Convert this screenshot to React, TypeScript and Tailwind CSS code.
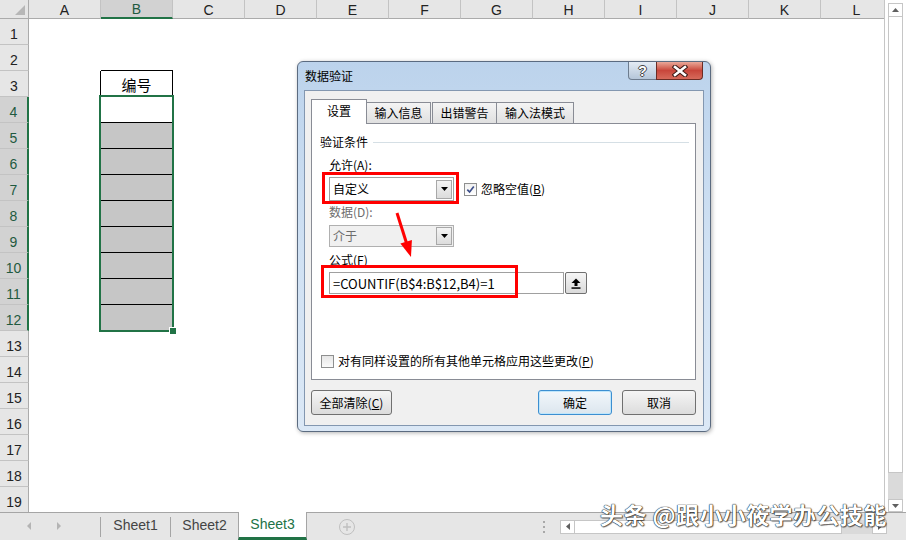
import React from 'react';

const COLS = ['A', 'B', 'C', 'D', 'E', 'F', 'G', 'H', 'I', 'J', 'K', 'L'];
const ROWS = Array.from({ length: 19 }, (_, i) => i + 1);

function cellClass(r: number, c: number): string {
  const base = 'w-[72px] h-[26px] shrink-0';
  if (c === 0 && r === 3) return base + ' border-r border-black';
  if (c === 1) {
    if (r === 2) return base + ' border-b border-black';
    if (r === 3) return base + ' border-r border-b border-black flex items-center justify-center';
    if (r === 4) return base + ' border-b border-black bg-white';
    if (r >= 5 && r <= 11) return base + ' border-b border-black bg-[#c6c6c6]';
    if (r === 12) return base + ' bg-[#c6c6c6]';
  }
  return base;
}

function rowHeaderClass(r: number): string {
  if (r >= 4 && r <= 12)
    return 'w-[29px] h-[26px] shrink-0 bg-[#d2d2d2] border-b border-[#c3c3c3] border-r-2 border-r-[#217346] text-[#1f5a40] flex items-end justify-center pb-[3px] text-[14px] leading-none';
  return 'w-[29px] h-[26px] shrink-0 bg-[#e6e6e6] border-b border-[#c3c3c3] border-r border-r-[#ababab] text-[#222] flex items-end justify-center pb-[3px] text-[14px] leading-none';
}

function Grid() {
  return (
    <div className="relative w-[885px] h-[512px] overflow-hidden border-r border-[#c6c6c6] flex flex-col">
      <div className="flex h-[19px] shrink-0">
        <div className="relative w-[29px] h-[19px] shrink-0 bg-[#e6e6e6] border-r border-b border-[#ababab]">
          <svg className="absolute left-0 top-0" width="29" height="19">
            <path d="M25 5 L25 15 L15 15 Z" fill="#b7b7b7" />
          </svg>
        </div>
        {COLS.map((c, i) =>
          i === 1 ? (
            <div
              key={c}
              className="w-[72px] h-[19px] shrink-0 bg-[#d2d2d2] border-r border-[#c3c3c3] border-b-2 border-b-[#217346] flex items-center justify-center text-[14px] leading-none text-[#1f5a40] pt-[1px]"
            >
              {c}
            </div>
          ) : (
            <div
              key={c}
              className="w-[72px] h-[19px] shrink-0 bg-[#e6e6e6] border-r border-[#c3c3c3] border-b border-b-[#ababab] flex items-center justify-center text-[14px] leading-none text-[#222] pt-[1px]"
            >
              {c}
            </div>
          )
        )}
      </div>
      {ROWS.map((r) => (
        <div key={r} className="flex h-[26px] shrink-0">
          <div className={rowHeaderClass(r)}>{r}</div>
          {COLS.map((c, i) => (
            <div key={c} className={cellClass(r, i)}>
              {r === 3 && i === 1 ? (
                <span className="font-['Noto_Sans_CJK_SC',sans-serif] text-[15px] leading-none pt-[2px] text-black">编号</span>
              ) : null}
            </div>
          ))}
        </div>
      ))}
      <div className="absolute left-[99px] top-[95px] w-[75px] h-[237px] border-2 border-[#217346]" />
      <div className="absolute left-[169px] top-[327px] w-[8px] h-[8px] bg-[#217346] border border-white" />
    </div>
  );
}

function VScroll() {
  return (
    <div className="w-[21px] h-[512px] bg-white flex flex-col pl-[3px] pr-[3px] pt-[3px]">
      <div className="w-[15px] h-[14px] border border-[#c6c6c6] bg-white flex items-center justify-center">
        <svg width="7" height="4"><path d="M0 4 L3.5 0 L7 4 Z" fill="#606060" /></svg>
      </div>
      <div className="w-[15px] h-[456px] border border-[#c6c6c6] border-t-0 bg-white" />
      <div className="w-[15px] h-[26px] bg-[#dadada]" />
      <div className="w-[15px] h-[13px] border border-[#c6c6c6] bg-white flex items-center justify-center">
        <svg width="7" height="4"><path d="M0 0 L7 0 L3.5 4 Z" fill="#606060" /></svg>
      </div>
    </div>
  );
}

function TabBar() {
  return (
    <div className="flex h-[28px] bg-[#e6e6e6] text-[14px] leading-none">
      <div className="w-[100px] shrink-0 border-t border-[#a5a5a5] relative">
        <svg className="absolute left-0 top-0" width="100" height="27">
          <path d="M31 9 L31 17 L27 13 Z" fill="#b4b4b4" />
          <path d="M57 9 L57 17 L61 13 Z" fill="#b4b4b4" />
        </svg>
      </div>
      <div className="w-[70px] shrink-0 border-t border-[#a5a5a5] flex items-center">
        <div className="w-px h-[20px] bg-[#a5a5a5]" />
        <div className="flex-1 text-center text-[#444] pb-[3px]">Sheet1</div>
      </div>
      <div className="w-[68px] shrink-0 border-t border-[#a5a5a5] flex items-center">
        <div className="w-px h-[20px] bg-[#a5a5a5]" />
        <div className="flex-1 text-center text-[#444] pb-[3px]">Sheet2</div>
      </div>
      <div className="w-[69px] shrink-0 bg-white border-l border-r border-[#a5a5a5] border-b-[3px] border-b-[#217346] flex items-center justify-center text-[#217346] pb-[1px]">
        Sheet3
      </div>
      <div className="flex-1 border-t border-[#a5a5a5] flex items-center">
        <div className="ml-[32px] w-[16px] h-[16px] rounded-full border border-[#c0c0c0] flex items-center justify-center">
          <svg width="8" height="8"><path d="M4 0 V8 M0 4 H8" stroke="#c0c0c0" strokeWidth="1.4" /></svg>
        </div>
        <div className="ml-[188px] w-[2px] h-[12px] flex flex-col justify-between">
          <div className="w-[2px] h-[2px] bg-[#a8a8a8]" />
          <div className="w-[2px] h-[2px] bg-[#a8a8a8]" />
          <div className="w-[2px] h-[2px] bg-[#a8a8a8]" />
        </div>
        <div className="ml-[15px] flex h-[14px]">
          <div className="w-[15px] h-[14px] border border-[#c6c6c6] bg-white flex items-center justify-center">
            <svg width="4" height="7"><path d="M4 0 L4 7 L0 3.5 Z" fill="#606060" /></svg>
          </div>
          <div className="w-[267px] h-[14px] border border-[#c6c6c6] border-l-0 bg-white" />
          <div className="w-[30px] h-[14px] bg-[#dadada]" />
          <div className="w-[15px] h-[14px] border border-[#c6c6c6] bg-white flex items-center justify-center">
            <svg width="4" height="7"><path d="M0 0 L4 3.5 L0 7 Z" fill="#606060" /></svg>
          </div>
        </div>
      </div>
    </div>
  );
}

function ComboArrow() {
  return (
    <div className="w-[16px] h-[19px] mr-[1px] border border-[#a8a8a8] bg-linear-to-b from-[#f4f4f4] to-[#dcdcdc] flex items-center justify-center">
      <svg width="7" height="4"><path d="M0 0 L7 0 L3.5 4 Z" fill="#000" /></svg>
    </div>
  );
}

function Btn({ children, w, primary }: { children: React.ReactNode; w: string; primary?: boolean }) {
  const cls = primary
    ? 'h-[25px] rounded-[3px] border border-[#3c8fd1] shadow-[inset_0_0_0_1px_#bfe6fb] bg-linear-to-b from-[#f2f7fb] to-[#dce6ee] flex items-center justify-center'
    : 'h-[25px] rounded-[3px] border border-[#707070] bg-linear-to-b from-[#f5f5f5] to-[#dcdcdc] flex items-center justify-center';
  return <div className={cls + ' ' + w}>{children}</div>;
}

function Dialog() {
  return (
    <div className="absolute left-[297px] top-[61px] w-[414px] h-[371px] rounded-[6px] border border-[#5b6b80] bg-linear-to-b from-[#bcd3ec] via-[#d0e1f3] to-[#dbe8f6] font-['Noto_Sans_CJK_SC',sans-serif] text-[12px] leading-none text-black flex flex-col shadow-[1px_1px_4px_rgba(0,0,0,0.3)]">
      <div className="relative h-[28px] shrink-0 flex items-center pl-[7px]">
        <span>数据验证</span>
        <div className="absolute left-[330px] top-0 w-[29px] h-[18px] border border-t-0 border-[#6d7c8e] rounded-bl-[4px] bg-linear-to-b from-[#e3ebf4] to-[#b5c6d9] flex items-center justify-center">
          <span className="font-['Liberation_Sans',sans-serif] font-bold text-[14px] text-white [text-shadow:1px_0_0_#444,-1px_0_0_#444,0_1px_0_#444,0_-1px_0_#444]">?</span>
        </div>
        <div className="absolute left-[358px] top-0 w-[47px] h-[18px] border border-t-0 border-[#6b2c24] rounded-br-[4px] bg-linear-to-b from-[#e9a899] via-[#c8463b] to-[#d66a5b] flex items-center justify-center">
          <svg width="16" height="12" viewBox="0 0 16 12">
            <path d="M3 2 L13 10 M13 2 L3 10" stroke="#3b1a16" strokeWidth="4.6" strokeLinecap="square" />
            <path d="M3 2 L13 10 M13 2 L3 10" stroke="#fff" strokeWidth="2.6" strokeLinecap="square" />
          </svg>
        </div>
      </div>
      <div className="mx-[6px] h-[336px] shrink-0 border border-[#8397b0] bg-[#f0f0f0] px-[6px] pt-[8px] flex flex-col">
        <div className="flex items-end h-[24px] shrink-0">
          <div className="relative z-10 -mb-px w-[56px] h-[25px] bg-white border border-b-0 border-[#898c95] flex items-center justify-center pb-[2px]">
            设置
          </div>
          <div className="w-[64px] h-[21px] bg-linear-to-b from-[#f4f4f4] to-[#e0e0e0] border border-b-0 border-l-0 border-[#898c95] flex items-center justify-center">
            输入信息
          </div>
          <div className="ml-px w-[65px] h-[21px] bg-linear-to-b from-[#f4f4f4] to-[#e0e0e0] border border-b-0 border-[#898c95] flex items-center justify-center">
            出错警告
          </div>
          <div className="w-[77px] h-[21px] bg-linear-to-b from-[#f4f4f4] to-[#e0e0e0] border border-b-0 border-l-0 border-[#898c95] flex items-center justify-center">
            输入法模式
          </div>
        </div>
        <div className="relative w-[385px] h-[257px] shrink-0 border border-[#898c95] bg-white flex flex-col">
          <div className="mt-[10px] h-[16px] flex items-center pl-[8px]">
            <span>验证条件</span>
            <div className="flex-1 h-px bg-[#d5dfe5] ml-[5px] mr-[6px]" />
          </div>
          <div className="mt-[7px] h-[16px] flex items-center pl-[17px]">允许(A):</div>
          <div className="mt-[4px] flex items-center pl-[17px]">
            <div className="w-[125px] h-[24px] border border-[#a0a0a0] bg-white flex items-center justify-between pl-[3px]">
              <span>自定义</span>
              <ComboArrow />
            </div>
            <div className="ml-[10px] w-[13px] h-[13px] border border-[#8e8f8f] bg-linear-to-b from-[#f0f0f0] to-[#ffffff] flex items-center justify-center">
              <svg width="9" height="9" viewBox="0 0 9 9">
                <path d="M1.3 4.6 L3.6 7 L7.8 1.5" stroke="#3d4f8a" strokeWidth="1.7" fill="none" />
              </svg>
            </div>
            <span className="ml-[4px]">
              忽略空值(<span className="underline">B</span>)
            </span>
          </div>
          <div className="mt-[3px] h-[16px] flex items-center pl-[17px] text-[#6d6d6d]">数据(D):</div>
          <div className="mt-[5px] flex items-center pl-[17px]">
            <div className="w-[125px] h-[22px] border border-[#b0b0b0] bg-[#f0f0f0] flex items-center justify-between pl-[3px] text-[#6d6d6d]">
              <span>介于</span>
              <div className="w-[16px] h-[18px] mr-[1px] border border-[#a8a8a8] bg-linear-to-b from-[#f4f4f4] to-[#dcdcdc] flex items-center justify-center">
                <svg width="7" height="4"><path d="M0 0 L7 0 L3.5 4 Z" fill="#000" /></svg>
              </div>
            </div>
          </div>
          <div className="mt-[5px] h-[16px] flex items-center pl-[17px]">
            公式(<span className="underline">F</span>)
          </div>
          <div className="mt-[4px] flex items-center pl-[17px]">
            <div className="w-[235px] h-[22px] border border-[#a0a0a0] bg-white flex items-center pl-[3px] text-[13px]">
              =COUNTIF(B$4:B$12,B4)=1
            </div>
            <div className="ml-[1px] w-[22px] h-[22px] rounded-[2px] border border-[#707070] bg-linear-to-b from-[#f6f6f6] to-[#dadada] flex items-center justify-center">
              <svg width="10" height="11" viewBox="0 0 10 11">
                <path d="M5 0.5 L9.5 5 H0.5 Z" fill="#000" />
                <rect x="3.5" y="5" width="3" height="3" fill="#000" />
                <rect x="0.5" y="9.3" width="9" height="1.5" fill="#000" />
              </svg>
            </div>
          </div>
          <div className="mt-[59px] h-[16px] flex items-center pl-[9px]">
            <div className="w-[13px] h-[13px] border border-[#8e8f8f] bg-linear-to-b from-[#e6e6e6] to-[#fafafa]" />
            <span className="ml-[4px]">
              对有同样设置的所有其他单元格应用这些更改(<span className="underline">P</span>)
            </span>
          </div>
          <div className="absolute left-[10px] top-[48px] w-[137px] h-[32px] border-[3px] border-[#ff0000]" />
          <div className="absolute left-[9px] top-[141px] w-[197px] h-[33px] border-[3px] border-[#ff0000]" />
          <svg className="absolute left-0 top-0 pointer-events-none" width="383" height="255">
            <path d="M85 89 L94.5 119" stroke="#ff0000" strokeWidth="3" />
            <path d="M99 133 L99.9 115.9 L88.4 119.6 Z" fill="#ff0000" />
          </svg>
        </div>
        <div className="mt-[10px] w-[385px] flex justify-between">
          <Btn w="w-[81px]">
            全部清除(<span className="underline">C</span>)
          </Btn>
          <div className="flex gap-[10px]">
            <Btn w="w-[74px]" primary>
              确定
            </Btn>
            <Btn w="w-[74px]">取消</Btn>
          </div>
        </div>
      </div>
    </div>
  );
}

export default function App() {
  return (
    <div className="relative w-[906px] h-[540px] overflow-hidden bg-white font-['Liberation_Sans',sans-serif]">
      <div className="flex h-[512px]">
        <Grid />
        <VScroll />
      </div>
      <TabBar />
      <Dialog />
      <div className="absolute left-[600px] top-[500px] h-[28px] leading-[28px] whitespace-nowrap font-['Noto_Sans_CJK_SC',sans-serif] font-bold text-[23px] tracking-[0.4px] text-white [text-shadow:0_0_1px_#000,0_0_1px_#000,1px_1px_1px_rgba(0,0,0,0.5)]">
        头条 @跟小小筱学办公技能
      </div>
    </div>
  );
}
